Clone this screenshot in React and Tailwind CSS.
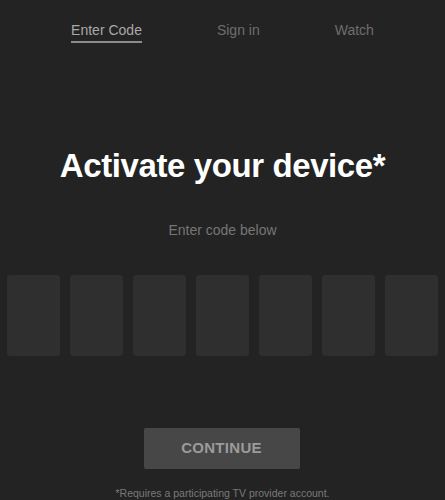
import React from 'react';

const tabs = [
    { label: 'Enter Code', active: true },
    { label: 'Sign in', active: false },
    { label: 'Watch', active: false },
];

const App = () => {
    return (
        <div className="w-[445px] h-[500px] bg-[#232323] overflow-hidden font-['Liberation_Sans',Arial,sans-serif]">
            <nav className="flex justify-center gap-[75px] pt-[22px]">
                {tabs.map((tab) => (
                    <div
                        key={tab.label}
                        className={
                            tab.active
                                ? 'text-[14px] leading-[17px] text-[#a8a8a8] border-b-2 border-[#8c8c8c] pb-[2px]'
                                : 'text-[14px] leading-[17px] text-[#6e6e6e] pb-[4px]'
                        }
                    >
                        {tab.label}
                    </div>
                ))}
            </nav>

            <h1 className="mt-[105px] text-center text-white font-bold text-[33px] leading-[36px] tracking-[-0.4px]">
                Activate your device*
            </h1>

            <p className="mt-[38px] text-center text-[14px] leading-[16px] text-[#767676]">
                Enter code below
            </p>

            <div className="flex gap-[10px] pl-[7px] mt-[37px]">
                {[...Array(7)].map((_, i) => (
                    <div key={i} className="w-[53px] h-[81px] bg-[#2f2f2f] rounded-[3px]" />
                ))}
            </div>

            <div className="flex justify-center mt-[72px]">
                <button className="w-[156px] h-[41px] bg-[#474747] rounded-[2px] text-[#9b9b9b] font-bold text-[15px] tracking-[0.3px] -translate-x-[1px]">
                    CONTINUE
                </button>
            </div>

            <p className="mt-[18px] text-center text-[10.5px] leading-[13px] text-[#7a7a7a]">
                *Requires a participating TV provider account.
            </p>
        </div>
    );
};

export default App;
